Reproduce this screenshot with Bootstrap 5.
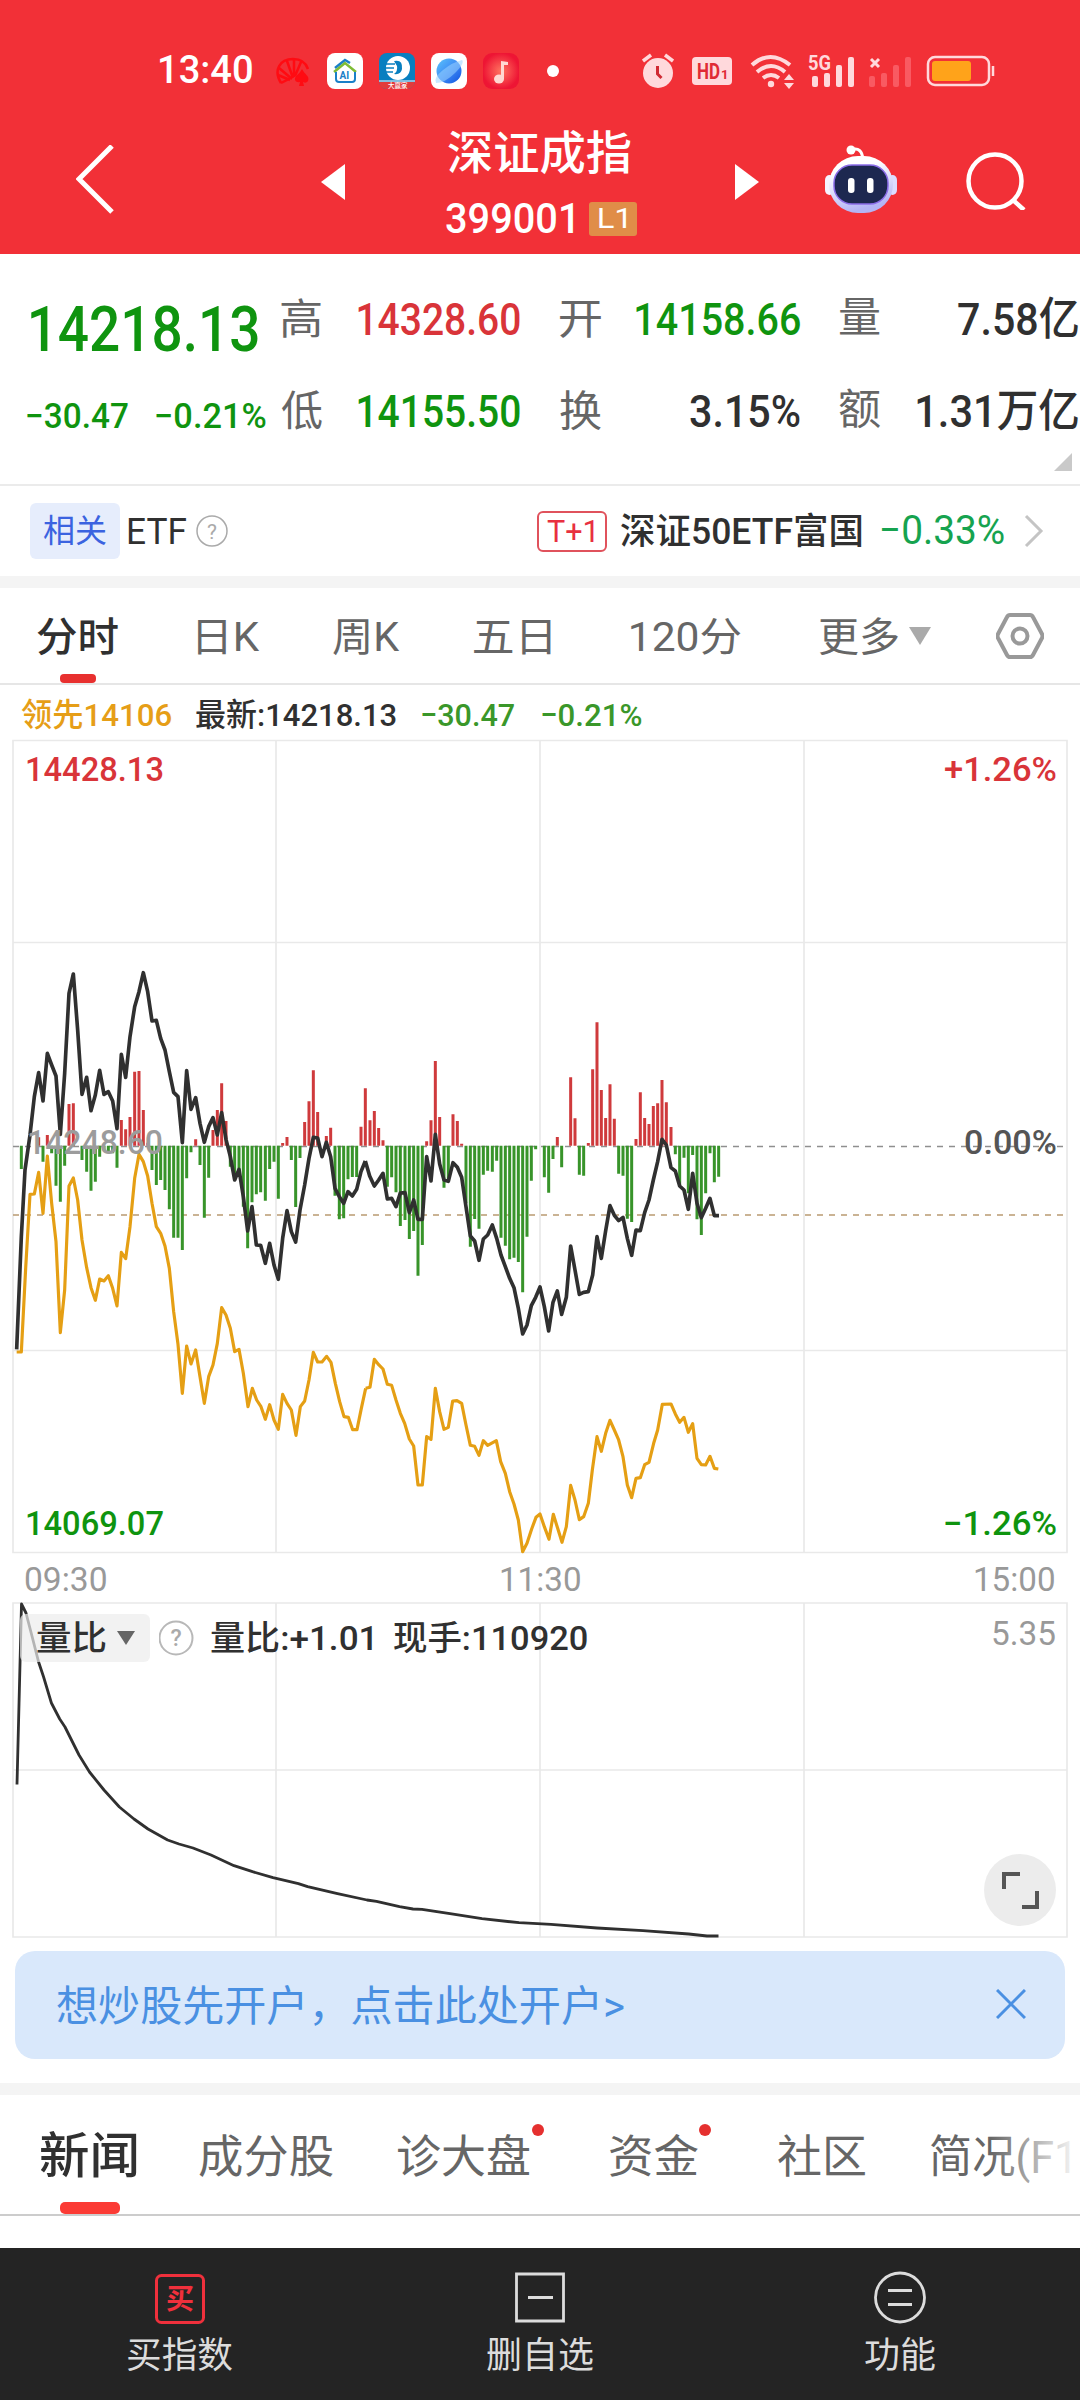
<!DOCTYPE html>
<html lang="zh-CN">
<head>
<meta charset="utf-8">
<meta name="viewport" content="width=device-width, initial-scale=1">
<title>深证成指 399001</title>
<link href="https://cdn.jsdelivr.net/npm/bootstrap@5.3.0/dist/css/bootstrap.min.css" rel="stylesheet">
<style>
body{width:1080px;height:2400px;overflow:hidden;background:#fff;color:#303030;font-family:Roboto,"Noto Sans CJK SC",sans-serif;line-height:1}
svg{display:block;flex:none}
svg text{font-family:Roboto,"Noto Sans CJK SC",sans-serif}
.fit{display:inline-block;white-space:nowrap;transform-origin:0 50%;line-height:1.2}
.lane{display:grid;align-items:center;justify-items:start;overflow:hidden}
.up{color:#d93439}.down{color:#0f940f}.dim{color:#666}.num{font-weight:500}
.topbar{background:#f23037;height:254px;color:#fff}
.status{height:70px;margin-top:36px;padding-left:160px;grid-template-columns:115px 52px 52px 52px 52px 64px 95px 50px 58px 58px 61px 57px 80px;font-size:38px;font-weight:500;width:1080px}
.heading{height:148px;padding-left:76px;grid-template-columns:245px 125px 289px 90px 141px 80px}
.heading-block{padding-top:13px}
.heading-name{height:58px;display:flex;align-items:center;font-size:46px;font-weight:500}
.heading-code{font-size:42px;padding:11px 0 4px}
.lvl{background:#e08d48;width:48px;height:34px;border-radius:3px;padding-left:10px;font-size:28px;display:flex;align-items:center}
.quote{height:232px;border-bottom:2px solid #ebebeb;display:grid;grid-template-columns:281px 1fr}
.q1{font-size:63px;height:70px;padding-left:31px}
.q2{font-size:35px;padding-left:27px;height:40px;display:grid;grid-template-columns:129px 1fr;align-items:center;justify-items:start}
.cells{grid-template-columns:77px 202px 76px 203px 1fr;height:92px;font-size:45px}
.cells .dim{font-size:42px}
.etf{height:90px;padding-left:30px;grid-template-columns:98px 68px 341px 84px 261px 142px 40px;font-size:36px}
.etf-text{padding-top:4px}
.tag-rel{background:#e6edfc;color:#3b63e0;border-radius:6px;width:90px;height:56px;padding-left:13px;display:flex;align-items:center;font-size:32px}
.tag-t{border:2px solid #e0525c;color:#e8303f;border-radius:6px;width:70px;height:41px;padding-left:8px;display:flex;align-items:center;font-size:32px}
.strip{height:12px;background:#f4f4f4}
.periods{height:97px;border-bottom:2px solid #e6e6e6;padding-left:37px;grid-template-columns:161px 135px 141px 157px 188px 90px 87px 60px;font-size:40px;color:#666;position:relative}
.periods .fit{padding-top:5px}
.period-on,.sect-on{color:#303030;font-weight:500}
.periods::after{content:"";position:absolute;left:60px;bottom:0;width:36px;height:9px;border-radius:4px;background:#e8302f}
.legend-row{height:54px;padding:6px 0 0 21px;grid-template-columns:175px 226px 120px 1fr;font-size:32px;font-weight:500}
.times{height:45px;padding-left:25px;grid-template-columns:476px 474px 1fr;font-size:33px;color:#999;padding-top:2px}
.lower{position:relative;height:338px}
.ratio-row{position:absolute;left:20px;top:13px;height:48px;padding-left:17px;grid-template-columns:80px 42px 52px 183px 1fr;font-size:34px;width:640px;font-weight:500}
.ratio-row::before{content:"";position:absolute;left:0;top:0;width:130px;height:48px;border-radius:6px;background:#ededed;opacity:.7}
.ratio-row>*{position:relative}
.expand{position:absolute;left:984px;top:253px}
.promo{margin:12px 15px 24px;height:108px;border-radius:20px;background:#d9e8fb;color:#4a90e2;padding-left:42px;grid-template-columns:939px 1fr;font-size:42px;padding-top:4px}
.sections{height:121px;border-bottom:2px solid #ccc;padding-left:40px;grid-template-columns:159px 199px 212px 168px 153px 1fr;font-size:45px;color:#666;position:relative;padding-top:6px}
.sections::before{content:"";position:absolute;left:60px;bottom:0;width:60px;height:12px;border-radius:5px;background:#fb3b35}
.sections::after{content:"";position:absolute;right:0;top:0;width:90px;height:118px;background:linear-gradient(90deg,#fff0,#fff)}
.sect-on{font-size:49px}
.reddot{position:absolute;width:12px;height:12px;border-radius:50%;background:#e5302f;top:29px}
.actions{margin-top:32px;height:153px;background:#242424;color:#dcdcdc;display:grid;grid-template-columns:1fr 1fr 1fr;font-size:36px}
.act{display:flex;flex-direction:column;align-items:center;padding-top:23px;gap:10px}
</style>
<script src="https://cdn.jsdelivr.net/npm/bootstrap@5.3.0/dist/js/bootstrap.bundle.min.js"></script>
</head>
<body>
<header class="topbar d-flex flex-column">
  <div class="lane status">
    <span class="fit" data-w="92">13:40</span>
    <svg width="36" height="36" viewBox="0 0 36 36" fill="none" stroke="#ff0b12" stroke-width="2.5"><path d="M6 30C-2 17 5 6 18 6c8 0 13 4 15 10M6 30l8-4M12 8l6 17M19 7v17M26 9l-6 14M4 15l13 11M3 22l12 5"/><path d="M27 16c3 6 8 7 6 12-2 3-5 1-5 1l1 4h-5l1-4s-4 1-5-2c-1-4 4-5 7-11z" fill="#ff0b12" stroke="none"/></svg>
    <svg width="36" height="36" viewBox="0 0 36 36"><rect width="36" height="36" rx="8" fill="#fff"/><g fill="none" stroke-width="2.5"><path d="M8 15L18 7l5 3" stroke="#1a80c8"/><path d="M7 19l11-9 11 9" stroke="#7ebc35"/><path d="M9 19v7q0 3 3 3h13q3 0 3-3v-7" stroke="#1a80c8" stroke-width="2"/></g><text x="12.5" y="26" font-size="10" font-weight="700" fill="#1a80c8">AI</text></svg>
    <svg width="36" height="36" viewBox="0 0 36 36"><rect width="36" height="36" rx="8" fill="#087fc0"/><circle cx="19" cy="15" r="12" fill="#fff"/><path d="M15 8q9-2 8 8-1 6-8 5 4-3 3-8z" fill="#087fc0"/><path d="M4 11h12M4 15h11M4 19h10" stroke="#087fc0" stroke-width="1.6"/><path d="M0 28h36" stroke="#fff"/><path d="M0 29h36q-1 7-8 7H8q-7 0-8-7z" fill="#e23b3b"/><text x="9" y="35" font-size="6.5" fill="#fff">大赢家</text></svg>
    <svg width="36" height="36" viewBox="0 0 36 36"><defs><linearGradient id="gb" x1="0" y1="0" x2="1" y2="1"><stop offset="0" stop-color="#5bc4fb"/><stop offset=".5" stop-color="#3f8cf5"/><stop offset="1" stop-color="#1152df"/></linearGradient></defs><rect width="36" height="36" rx="8" fill="#fff"/><circle cx="18" cy="18" r="12.5" fill="url(#gb)"/><path d="M5 30Q2 25 12 17T31 7q3 3-7 13T5 30z" fill="#9ad4ff" opacity=".55"/></svg>
    <svg width="36" height="36" viewBox="0 0 36 36"><defs><radialGradient id="gm"><stop offset="0" stop-color="#ff7560"/><stop offset="1" stop-color="#ee1534"/></radialGradient></defs><rect width="36" height="36" rx="9" fill="url(#gm)"/><path d="M18 26V8l7 1v3h-4v14" fill="#ffd9d2"/><ellipse cx="16" cy="26" rx="5" ry="4.5" fill="#ffd9d2"/></svg>
    <svg width="12" height="12"><circle cx="6" cy="6" r="6" fill="#fff"/></svg>
    <svg width="32" height="36" viewBox="0 0 32 36"><circle cx="16" cy="20" r="15" fill="#ffd9dc"/><path d="M1 8l8-6M31 8l-8-6" stroke="#ffd9dc" stroke-width="3.5"/><path d="M15.500 13v8l4 4" stroke="#d02a33" stroke-width="3" fill="none"/></svg>
    <svg width="40" height="30" viewBox="0 0 40 30"><rect y="1" width="40" height="28" rx="4" fill="#ffd9dc"/><text x="5" y="23" font-size="22" font-weight="700" fill="#e02a34" textLength="23" lengthAdjust="spacingAndGlyphs">HD</text><text x="29" y="23" font-size="13" font-weight="700" fill="#e02a34">1</text></svg>
    <svg width="46" height="36" viewBox="0 0 46 36" fill="none" stroke="#ffd9dc" stroke-width="4"><path d="M2 12q18-16 38 0M7 19q14-12 28 0M13 25q8-6 16 0"/><circle cx="21" cy="31" r="3.2" fill="#ffd9dc" stroke="none"/><path d="M34 27l5-6 5 6zM34 30l5 6 5-6z" fill="#ffd9dc" stroke="none"/></svg>
    <svg width="48" height="36" viewBox="0 0 48 36" fill="#ffd9dc"><rect x="4" y="23" width="6" height="11" rx="2"/><rect x="16" y="20" width="6" height="14" rx="2"/><rect x="28" y="12" width="6" height="22" rx="2"/><rect x="40" y="4" width="6" height="30" rx="2"/><text x="0" y="17" font-size="20" font-weight="700" textLength="23" lengthAdjust="spacingAndGlyphs">5G</text></svg>
    <svg width="46" height="36" viewBox="0 0 46 36" fill="#f95a62"><rect x="0" y="23" width="6" height="11" rx="2"/><rect x="12" y="20" width="6" height="14" rx="2"/><rect x="24" y="12" width="6" height="22" rx="2"/><rect x="36" y="4" width="6" height="30" rx="2"/><path d="M2 6l8 8M10 6l-8 8" stroke="#ffd9dc" stroke-width="3"/></svg>
    <svg width="70" height="32" viewBox="0 0 70 32"><rect x="2" y="2" width="61" height="28" rx="7" fill="none" stroke="#ffd9dc" stroke-width="2.500"/><rect x="6" y="6" width="39" height="20" rx="3" fill="#ffa31a"/><path d="M67 11v10" stroke="#ffd9dc" stroke-width="2.500"/></svg>
  </div>
  <div class="lane heading">
    <svg width="40" height="70" viewBox="0 -2 40 70"><path d="M36 0L3 33l33 33" fill="none" stroke="#fff" stroke-width="5" transform="translate(0 -1)"/></svg>
    <svg width="24" height="40"><path d="M24 4v36L0 22z" fill="#fff"/></svg>
    <div class="heading-block">
      <div class="heading-name"><span class="fit" data-w="183" style="margin-left:2px">深证成指</span></div>
      <div class="d-flex align-items-center num heading-code"><span class="fit" data-w="127">399001</span><span class="lvl ms-3 fw-normal"><span class="fit" data-w="27">L1</span></span></div>
    </div>
    <svg width="24" height="40"><path d="M0 4v36l24-18z" fill="#fff"/></svg>
    <svg width="72" height="70" viewBox="0 0 72 70"><defs><linearGradient id="rb" x1="0" y1="0" x2=".3" y2="1"><stop offset=".3" stop-color="#fff"/><stop offset="1" stop-color="#b3b4f5"/></linearGradient></defs><path d="M26 5q11-4 12 10" stroke="#fff" stroke-width="3" fill="none"/><circle cx="26" cy="5" r="4.500" fill="#fff"/><rect x="0" y="30" width="9" height="20" rx="5" fill="#f6f3ff"/><rect x="63" y="30" width="9" height="20" rx="5" fill="#dcdcff"/><rect x="4" y="11" width="64" height="57" rx="29" fill="url(#rb)"/><rect x="9" y="20" width="54" height="39" rx="18" fill="#1d2850" stroke="#8a6ce8" stroke-width="1.500"/><rect x="23" y="33" width="6.500" height="15" rx="3" fill="#fff"/><rect x="42" y="33" width="6.500" height="15" rx="3" fill="#fff"/></svg>
    <svg width="62" height="60" viewBox="0 0 62 60" fill="none" stroke="#fff" stroke-width="4.500"><circle cx="29" cy="31" r="26.500"/><path d="M47 50l11 10"/></svg>
  </div>
</header>

<section class="quote">
  <div class="d-flex flex-column gap-4" style="padding-top:38px">
    <div class="q1 down num"><span class="fit" data-w="227">14218.13</span></div>
    <div class="q2 down num" style="margin-top:10px"><span class="fit" data-w="101">−30.47</span><span class="fit" data-w="110">−0.21%</span></div>
  </div>
  <div class="position-relative" style="padding-top:20px">
    <div class="lane cells num">
      <span class="fit dim fw-normal" data-w="40">高</span><span class="fit up" data-w="162">14328.60</span>
      <span class="fit dim fw-normal" data-w="41">开</span><span class="fit down" data-w="164">14158.66</span>
      <div class="d-flex w-100" style="gap:78px"><span class="fit dim fw-normal" data-w="41">量</span><span class="fit" data-w="120">7.58亿</span></div>
    </div>
    <div class="lane cells num">
      <span class="fit dim fw-normal" data-w="41">低</span><span class="fit down" data-w="162">14155.50</span>
      <span class="fit dim fw-normal" data-w="41">换</span><span class="fit" data-w="110" style="margin-left:54px">3.15%</span>
      <div class="d-flex w-100" style="gap:37px"><span class="fit dim fw-normal" data-w="41">额</span><span class="fit" data-w="161">1.31万亿</span></div>
    </div>
    <svg class="position-absolute" style="right:8px;top:199px" width="18" height="18"><path d="M18 0v18H0z" fill="#c9c9c9"/></svg>
  </div>
</section>

<section class="lane etf">
  <span class="tag-rel"><span class="fit" data-w="63">相关</span></span>
  <span class="fit etf-text" data-w="58">ETF</span>
  <svg width="32" height="32"><circle cx="16" cy="16" r="15" fill="none" stroke="#aaa" stroke-width="1.500"/><text x="16" y="24" text-anchor="middle" font-size="21" fill="#aaa">?</text></svg>
  <span class="tag-t"><span class="fit" data-w="47">T+1</span></span>
  <span class="fit etf-text num" data-w="240">深证50ETF富国</span>
  <span class="fit" data-w="122" style="color:#16a34f;font-size:40px">−0.33%</span>
  <svg width="20" height="34"><path d="M2 2l15 15L2 32" fill="none" stroke="#c4c4c4" stroke-width="3"/></svg>
</section>
<div class="strip"></div>

<nav class="lane periods">
  <span class="fit period-on" data-w="81">分时</span><span class="fit" data-w="62">日K</span><span class="fit" data-w="67">周K</span><span class="fit" data-w="77">五日</span><span class="fit" data-w="110">120分</span><span class="fit" data-w="79">更多</span>
  <svg width="22" height="18"><path d="M0 0h22L11 18z" fill="#aaa"/></svg>
  <svg width="48" height="46" viewBox="0 0 48 46" fill="none" stroke="#999" stroke-width="4"><path d="M14 2h20q2 0 3 2l9 17q1 2 0 4l-9 17q-1 2-3 2H14q-2 0-3-2L2 25q-1-2 0-4l9-17q1-2 3-2z"/><circle cx="24" cy="23" r="7.500"/></svg>
</nav>
<div class="lane legend-row">
  <span class="fit" data-w="150" style="color:#e69e17">领先14106</span><span class="fit" data-w="200">最新:14218.13</span><span class="fit" data-w="92" style="color:#3a972a">−30.47</span><span class="fit" data-w="100" style="color:#3a972a">−0.21%</span>
</div>

<svg width="1080" height="817" viewBox="0 739 1080 817">
  <g fill="none" stroke="#e9e9e9" stroke-width="1.700"><path d="M13 740.500h1054v812H13zM276 740v812M540 740v812M804 740v812M13 942.500h1054M13 1350.500h1054"/></g>
  <path d="M13 1146.500h1050" stroke="#8f8f8f" stroke-width="1.500" stroke-dasharray="6 6"/>
  <path d="M13 1215h1050" stroke="#b99b72" stroke-width="1.500" stroke-dasharray="6 6"/>
  <g transform="translate(0 940) scale(.33333)">
    <path id="barsRed" stroke="#cf3a3c" stroke-width="9"/>
    <path id="barsGreen" stroke="#38942a" stroke-width="9"/>
  </g>
  <g transform="translate(0 940) scale(.33333)" fill="none" stroke-linejoin="round">
    <polyline stroke="#e59f14" stroke-width="9.500" points="50,1236 64,1236 77,985 90,763 103,762 116,697 129,820 142,648 155,790 168,905 181,1178 194,1050 207,738 220,714 233,780 246,900 260,983 273,1043 286,1081 299,1017 312,1023 325,1007 338,1045 351,1098 364,937 377,956 390,860 404,715 417,643 430,665 443,708 456,790 469,860 482,880 495,918 508,985 521,1115 534,1213 547,1360 560,1218 573,1272 587,1230 600,1310 613,1390 626,1310 639,1275 652,1210 665,1103 678,1125 691,1165 704,1235 717,1228 730,1300 744,1400 757,1345 770,1380 783,1400 796,1438 809,1394 822,1440 835,1468 848,1363 861,1390 874,1410 888,1486 901,1400 914,1383 927,1320 940,1237 953,1266 966,1266 980,1249 993,1267 1006,1330 1019,1385 1032,1430 1045,1432 1058,1469 1071,1469 1084,1405 1097,1345"/>
    <polyline transform="translate(1050 1170)" stroke="#e59f14" stroke-width="9.500" points="47,175 60,172 73,88 86,104 99,117 112,163 125,166 138,210 151,250 164,280 178,327 191,348 204,465 217,465 230,320 243,328 256,175 269,245 282,298 295,292 308,213 321,212 335,220 348,285 361,346 374,349 387,376 400,332 413,346 439,332 452,395 466,430 479,485 492,522 505,570 518,665 531,640 545,597 558,562 570,552 583,590 597,628 610,553 623,595 636,637 649,590 662,466 675,510 688,569 701,560 715,520 727,420 741,320 754,364 767,310 780,271 793,300 806,330 819,380 832,465 845,503 858,445 871,443 884,404 897,397 911,340 923,300 937,223 963,222 976,252 989,277 1002,262 1015,307 1028,281 1041,385 1054,404 1067,405 1080,379 1093,415 1105,417"/>
    <polyline stroke="#303030" stroke-width="11" points="50,1228 64,890 75,690 90,585 103,470 116,398 129,483 142,340 155,375 168,408 181,583 194,400 207,160 220,102 233,270 246,463 260,412 273,512 286,465 299,391 312,463 325,455 338,483 351,566 364,343 377,412 390,290 404,200 417,155 430,98 443,155 456,243 469,241 482,295 495,330 508,395 521,457 534,470 547,608 560,392 573,508 587,473 600,550 613,607 626,560 639,533 652,585 665,518 678,598 691,650 704,720 717,688 730,770 743,873 756,800 769,915 782,916 796,970 809,910 822,975 835,1018 848,895 861,812 874,875 887,906 900,810 914,735 927,655 940,592 953,594 966,650 979,607 992,650 1005,745 1018,770 1031,790 1044,755 1057,768 1070,748 1083,695 1096,663"/>
    <polyline transform="translate(1080 0)" stroke="#303030" stroke-width="11" points="16,663 29,708 43,738 56,720 69,700 82,777 95,775 108,800 121,759 135,758 148,818 161,780 174,838 187,838 200,650 213,723 226,583 239,672 252,720 265,724 279,668 292,682 305,712 318,800 331,888 344,903 357,961 370,897 383,885 397,855 410,895 423,945 436,980 449,1015 462,1043 475,1105 488,1182 501,1155 514,1097 527,1072 540,1041 553,1100 566,1173 579,1087 592,1053 605,1123 619,1072 632,918 645,990 658,1063 671,1057 685,1055 698,1005 711,890 724,955 737,872 750,797 763,826 776,842 789,832 802,895 815,946 828,870 841,872 854,818 867,780 880,720 893,665 906,598 919,615 933,683 946,693 959,738 972,750 985,808 998,700 1011,790 1024,833 1037,805 1050,775 1063,827 1077,827"/>
  </g>
  <g font-size="33" font-weight="500">
    <text x="25" y="781" fill="#d93439" textLength="139" lengthAdjust="spacingAndGlyphs">14428.13</text>
    <text x="944" y="781" fill="#d93439" textLength="113" lengthAdjust="spacingAndGlyphs">+1.26%</text>
    <text x="27" y="1154" fill="#9c9c9c" textLength="136" lengthAdjust="spacingAndGlyphs">14248.60</text>
    <text x="964" y="1154" fill="#555" textLength="93" lengthAdjust="spacingAndGlyphs">0.00%</text>
    <text x="25" y="1535" fill="#0f940f" textLength="139" lengthAdjust="spacingAndGlyphs">14069.07</text>
    <text x="943" y="1535" fill="#0f940f" textLength="114" lengthAdjust="spacingAndGlyphs">−1.26%</text>
  </g>
</svg>
<div class="lane times"><span class="fit" data-w="81">09:30</span><span class="fit" data-w="79">11:30</span><span class="fit" data-w="79">15:00</span></div>

<section class="lower">
  <svg width="1080" height="338" viewBox="0 1601 1080 338">
    <path fill="none" stroke="#e9e9e9" stroke-width="1.700" d="M13 1603h1054v334H13zM276 1603v334M540 1603v334M804 1603v334M13 1770h1054"/>
    <polyline fill="none" stroke="#303030" stroke-width="2.800" stroke-linejoin="round" points="17,1784.500 21.500,1604 26,1613 33,1640 38.600,1662 43.600,1677 51.400,1703 59.700,1719 65,1727 79,1755 89.500,1772 104,1790 119.400,1807 134,1819 148,1829 167.600,1840 179,1844 193,1848 211,1855 234,1865.700 252.500,1871.700 273,1877.700 298.400,1883.700 307.600,1886.700 337.500,1893.700 367,1900 376.500,1901.300 399.500,1906.700 413,1909 422,1909.300 450,1913.700 482,1918.700 519,1922.700 551,1924.300 597,1928 643,1930.700 688.700,1934 707,1936 718.500,1936"/>
    <text x="991" y="1645" font-size="33" fill="#999" textLength="65" lengthAdjust="spacingAndGlyphs">5.35</text>
  </svg>
  <div class="lane ratio-row">
    <span class="fit" data-w="69">量比</span>
    <svg width="18" height="14"><path d="M0 0h18L9 14z" fill="#666"/></svg>
    <svg width="36" height="36"><circle cx="17" cy="18" r="16.500" fill="none" stroke="#b8b8b8" stroke-width="2"/><text x="17" y="26" text-anchor="middle" font-size="23" fill="#aaa">?</text></svg>
    <span class="fit" data-w="161">量比:+1.01</span><span class="fit" data-w="193">现手:110920</span>
  </div>
  <svg class="expand" width="72" height="72"><circle cx="36" cy="36" r="36" fill="#ececec"/><path d="M20 35V20h16M53 37v16H38" fill="none" stroke="#555" stroke-width="4"/></svg>
</section>

<div class="lane promo"><span class="fit" data-w="567">想炒股先开户，点击此处开户&gt;</span><svg width="30" height="30" style="margin-bottom:6px"><path d="M1 1l28 28M29 1L1 29" stroke="#4a90e2" stroke-width="3"/></svg></div>
<div class="strip"></div>
<nav class="lane sections">
  <span class="fit sect-on" data-w="97">新闻</span><span class="fit" data-w="134">成分股</span><span class="fit" data-w="132">诊大盘</span><span class="fit" data-w="88">资金</span><span class="fit" data-w="87">社区</span><span class="fit" data-w="184">简况(F10)</span>
  <i class="reddot" style="left:532px"></i><i class="reddot" style="left:699px"></i>
</nav>
<footer class="actions">
  <div class="act"><svg width="50" height="54" viewBox="0 0 50 54"><rect x="1.500" y="4.500" width="47" height="47" rx="5" fill="none" stroke="#f0303c" stroke-width="3"/><text x="25" y="38" text-anchor="middle" font-size="28" font-weight="700" fill="#f0303c">买</text></svg><span class="fit" data-w="105">买指数</span></div>
  <div class="act"><svg width="50" height="54" viewBox="0 0 50 54"><path d="M1.500 3h47v47h-47zM13 26.500h25" fill="none" stroke="#dcdcdc" stroke-width="2.800"/></svg><span class="fit" data-w="106">删自选</span></div>
  <div class="act"><svg width="52" height="54" viewBox="0 0 52 54" fill="none" stroke="#dcdcdc" stroke-width="2.800"><circle cx="26" cy="26.500" r="24.500"/><path d="M14 19.500h24M14 33.500h24"/></svg><span class="fit" data-w="70">功能</span></div>
</footer>

<script>
// Momentum bars: "x:y" pairs, measured from the zero line at y=617
const red="116:592 142:585 207:492 220:490 364:540 377:568 390:531 404:395 417:393 430:510 443:608 587:598 639:570 652:510 665:430 678:543 848:609 861:591 914:546 927:484 940:391 953:516 979:588 992:563 1083:560 1096:445 1110:541 1123:513 1136:564 1149:601 1280:604 1293:541 1306:363 1319:531 1359:523 1372:543 1385:611 1672:591 1712:412 1725:535 1765:609 1778:388 1791:247 1804:450 1817:534 1830:433 1843:536 1908:597 1921:457 1934:534 1947:552 1960:498 1973:490 1986:420 1999:487 2013:561";
const green="64:687 129:665 155:640 168:737 181:785 194:677 246:660 260:695 273:752 286:725 299:650 312:630 325:636 338:640 351:683 456:690 469:735 482:720 495:750 508:808 521:893 534:893 547:930 560:715 573:637 600:675 613:833 626:713 691:680 704:705 717:705 730:800 743:925 756:787 769:763 782:757 796:782 809:687 822:665 835:776 874:660 887:801 900:654 1005:767 1018:838 1031:835 1044:718 1057:711 1070:711 1162:740 1175:712 1188:757 1201:858 1215:840 1228:897 1241:873 1254:1007 1267:915 1332:743 1345:720 1398:790 1411:920 1424:837 1437:866 1450:704 1463:692 1477:695 1490:662 1503:893 1516:917 1529:958 1542:953 1555:966 1568:1057 1581:890 1594:722 1607:628 1633:712 1646:758 1659:657 1685:682 1738:704 1751:707 1856:701 1869:707 1882:836 1895:846 2026:643 2039:735 2052:653 2065:760 2078:645 2091:838 2104:885 2117:760 2130:640 2143:727 2156:710";
const bars=s=>s.split(" ").map(p=>{const [x,y]=p.split(":");return `M${x} 617V${y}`}).join("");
barsRed.setAttribute("d",bars(red));
barsGreen.setAttribute("d",bars(green));

// Condense each label to its data-w width, starting at the cell's left edge
const ctx=document.createElement("canvas").getContext("2d");
const sizes=[...document.querySelectorAll(".fit")].map(el=>{
  const cs=getComputedStyle(el);
  ctx.font=`${cs.fontWeight} ${cs.fontSize} ${cs.fontFamily}`;
  const m=ctx.measureText(el.textContent);
  return {el,w:el.offsetWidth,l:-m.actualBoundingBoxLeft,ink:m.actualBoundingBoxLeft+m.actualBoundingBoxRight};
});
for(const {el,w,l,ink} of sizes){
  const target=+el.dataset.w,k=target/ink;
  el.style.marginRight=(target-w)+"px";
  el.style.transform=`translateX(${-l*k}px) scaleX(${k})`;
}
</script>
</body>
</html>
